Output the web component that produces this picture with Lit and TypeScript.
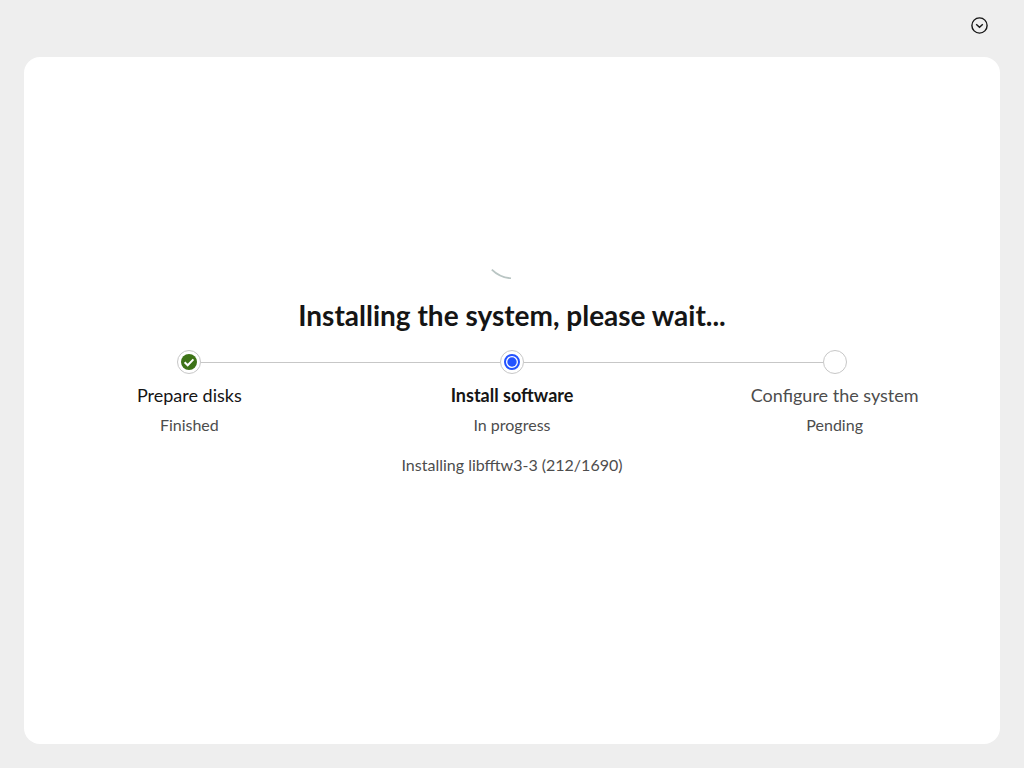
import { LitElement, html, css, nothing } from "lit";
import { customElement } from "lit/decorators.js";

type Status = "finished" | "progress" | "pending";

interface Step {
  title: string;
  status: Status;
  label: string;
}

@customElement("install-step")
class InstallStep extends LitElement {
  static properties = {
    step: { attribute: false },
  };

  declare step: Step;

  static styles = css`
    :host {
      display: flex;
      flex-direction: column;
      align-items: center;
      text-align: center;
    }
    .track {
      display: grid;
      grid-template-columns: 1fr auto 1fr;
      align-items: center;
      align-self: stretch;
    }
    .line {
      height: 1px;
      background: #c7c7c7;
    }
    :host(:first-child) .line.before,
    :host(:last-child) .line.after {
      visibility: hidden;
    }
    .marker {
      display: grid;
      place-items: center;
      box-sizing: border-box;
      width: 24px;
      height: 24px;
      border: 1px solid #c7c7c7;
      border-radius: 50%;
      background: #fff;
    }
    svg {
      display: block;
      width: 16px;
      height: 16px;
    }
    .title {
      margin-top: 7px;
      font-size: 18px;
      line-height: 28px;
      color: #151515;
    }
    .title.progress {
      font-weight: 700;
    }
    .title.pending {
      color: #4d4d4d;
    }
    .label {
      margin-top: 4px;
      font-size: 16px;
      line-height: 24px;
      color: #4d4d4d;
    }
  `;

  private icon(status: Status) {
    if (status === "finished") {
      return html`<svg viewBox="0 0 16 16" aria-hidden="true">
        <circle cx="8" cy="8" r="8" fill="#3d7317"></circle>
        <path d="M3.6 8.3 L6.7 11.3 L12.4 5.4" fill="none" stroke="#fff" stroke-width="2"></path>
      </svg>`;
    }
    if (status === "progress") {
      return html`<svg viewBox="0 0 16 16" aria-hidden="true">
        <circle cx="8" cy="8" r="7" fill="none" stroke="#2453ff" stroke-width="2"></circle>
        <circle cx="8" cy="8" r="4.7" fill="#2453ff"></circle>
      </svg>`;
    }
    return nothing;
  }

  render() {
    const { title, status, label } = this.step;
    return html`
      <div class="track">
        <span class="line before"></span>
        <span class="marker">${this.icon(status)}</span>
        <span class="line after"></span>
      </div>
      <div class="title ${status}">${title}</div>
      <div class="label">${label}</div>
    `;
  }
}

@customElement("app-root")
class AppRoot extends LitElement {
  static properties = {
    steps: { state: true },
    detail: { state: true },
  };

  declare steps: Step[];
  declare detail: string;

  constructor() {
    super();
    this.steps = [
      { title: "Prepare disks", status: "finished", label: "Finished" },
      { title: "Install software", status: "progress", label: "In progress" },
      { title: "Configure the system", status: "pending", label: "Pending" },
    ];
    this.detail = "Installing libfftw3-3 (212/1690)";
  }

  static styles = css`
    :host {
      display: flex;
      flex-direction: column;
      box-sizing: border-box;
      min-height: 100vh;
      padding: 0 24px 24px;
      background: #eee;
      color: #151515;
      font-family: Lato, "Noto Sans", sans-serif;
    }
    header {
      display: flex;
      justify-content: flex-end;
      padding: 8px 3px 14px;
    }
    button {
      display: grid;
      place-items: center;
      width: 35px;
      height: 35px;
      padding: 0;
      border: 0;
      background: none;
      color: #151515;
      cursor: pointer;
    }
    button svg {
      width: 17px;
      height: 17px;
    }
    main {
      display: flex;
      flex: 1;
      flex-direction: column;
      align-items: center;
      justify-content: center;
      padding: 0 4px 99px;
      border-radius: 16px;
      background: #fff;
    }
    .spinner {
      width: 54px;
      height: 54px;
    }
    h1 {
      margin: 17px 0 15px;
      font-size: 28px;
      font-weight: 700;
      line-height: 39px;
      text-align: center;
    }
    .steps {
      display: grid;
      grid-template-columns: repeat(3, 1fr);
      align-self: stretch;
    }
    .detail {
      margin: 16px 0 0;
      font-size: 16px;
      line-height: 24px;
      color: #4d4d4d;
    }
  `;

  render() {
    return html`
      <header>
        <button type="button" aria-label="Options">
          <svg viewBox="0 0 17 17" fill="none" stroke="currentColor" stroke-width="1.4" aria-hidden="true">
            <circle cx="8.5" cy="8.5" r="7.6"></circle>
            <path d="M5.2 7.2 L8.5 10.3 L11.8 7.2"></path>
          </svg>
        </button>
      </header>
      <main>
        <svg class="spinner" viewBox="0 0 54 54" role="img" aria-label="Installing">
          <path d="M6.8 44.6 Q15 52.6 26 53.3" fill="none" stroke="#b9c5c3" stroke-width="1.8"></path>
        </svg>
        <h1>Installing the system, please wait...</h1>
        <div class="steps">
          ${this.steps.map((step) => html`<install-step .step=${step}></install-step>`)}
        </div>
        <p class="detail">${this.detail}</p>
      </main>
    `;
  }
}
